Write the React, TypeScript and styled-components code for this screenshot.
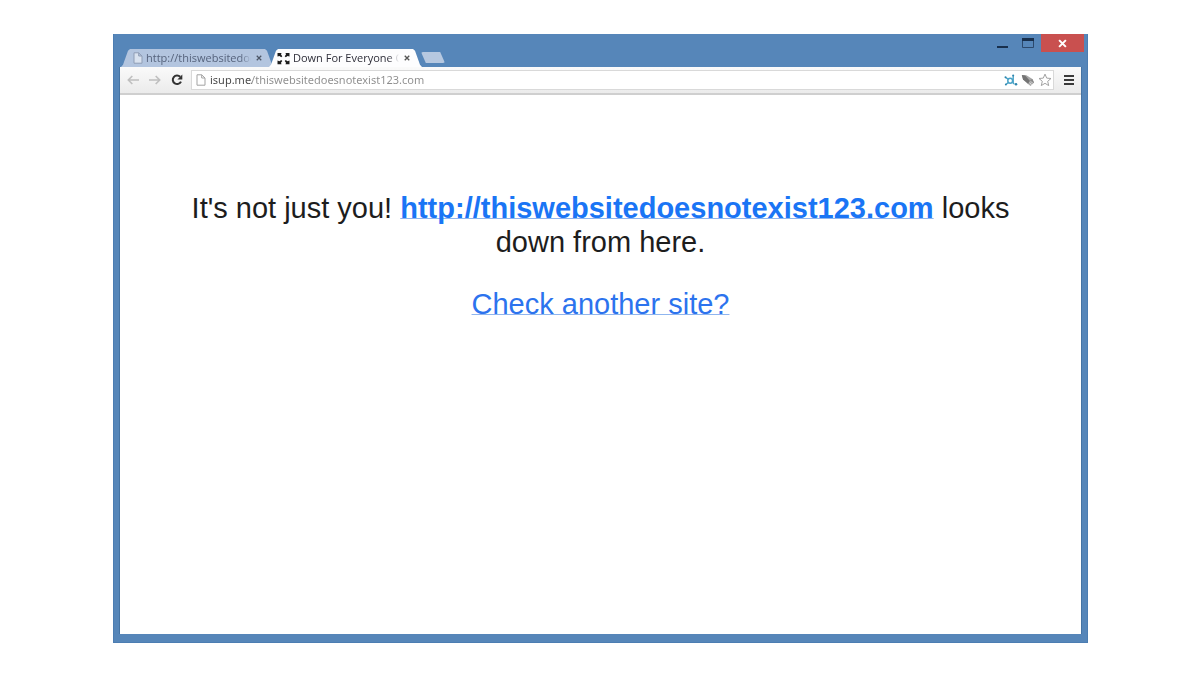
import React from "react";
import styled, { createGlobalStyle } from "styled-components";

const GlobalStyle = createGlobalStyle`
  * { box-sizing: border-box; }
  body { margin: 0; background: #fff; }
  button { border: 0; padding: 0; background: none; cursor: pointer; }
  svg { display: block; flex: none; }
`;

const uiFont = `"Noto Sans", "Open Sans", sans-serif`;
const tabFont = `"Open Sans", "Noto Sans", sans-serif`;

const Desktop = styled.div`
  display: flex;
  min-height: 100vh;
  padding: 34px 112px 32px 113px;
`;

const BrowserWindow = styled.div`
  flex: 1;
  min-width: 0;
  display: flex;
  flex-direction: column;
  padding-bottom: 8px;
  background: #5686b9;
  border: 1px solid #4c7db2;
  border-top: 0;
  font-family: ${uiFont};
`;

const TitleBar = styled.header`
  display: flex;
  justify-content: space-between;
  height: 33px;
  padding: 0 3px 0 7px;
`;

const TabStrip = styled.div`
  display: flex;
  align-items: flex-end;
  min-width: 0;
`;

const Tab = styled.div<{ $active?: boolean }>`
  position: relative;
  z-index: ${(p) => (p.$active ? 1 : 0)};
  display: flex;
  align-items: center;
  gap: 3px;
  width: 153px;
  height: 18px;
  padding: 0 10px 0 ${(p) => (p.$active ? 8 : 12)}px;
  margin-right: -5px;

  &::before {
    content: "";
    position: absolute;
    inset: 0;
    z-index: -1;
    background: ${(p) => (p.$active ? "#fdfdfe" : "#b3c5df")};
    clip-path: polygon(0 100%, 2px 88%, 7px 10%, 9px 0, calc(100% - 9px) 0, calc(100% - 7px) 10%, calc(100% - 2px) 88%, 100% 100%);
  }
`;

const TabTitle = styled.button<{ $active?: boolean }>`
  flex: 1;
  min-width: 0;
  overflow: hidden;
  text-align: left;
  white-space: nowrap;
  font: 11px/16px ${tabFont};
  color: ${(p) => (p.$active ? "#2f2f3a" : "#56637c")};
  mask-image: linear-gradient(to right, #000 90%, transparent);
`;

const TabClose = styled.button`
  display: flex;
  align-items: center;
  justify-content: center;
  width: 10px;
  height: 16px;
`;

const NewTab = styled.button`
  width: 24px;
  height: 11px;
  margin: 0 0 4px 4px;
  background: #b6c8e0;
  border-radius: 2px;
  clip-path: polygon(0 0, 80% 0, 100% 100%, 20% 100%);
`;

const WindowControls = styled.div`
  display: flex;
  align-items: flex-start;
`;

const ControlButton = styled.button<{ $close?: boolean }>`
  display: flex;
  align-items: center;
  justify-content: center;
  width: ${(p) => (p.$close ? 43 : 26)}px;
  height: 18px;
  background: ${(p) => (p.$close ? "#c9504f" : "transparent")};
`;

const Viewport = styled.div`
  flex: 1;
  display: flex;
  flex-direction: column;
  margin: 0 5px;
  background: #fff;
  border-left: 1px solid #4573a3;
  border-right: 1px solid #4573a3;
`;

const Toolbar = styled.div`
  display: flex;
  align-items: center;
  height: 28px;
  padding: 0 4px 0 2px;
  background: linear-gradient(#fafafa, #ebebeb);
  border-bottom: 2px solid #cfcfcf;
`;

const ToolButton = styled.button`
  display: flex;
  align-items: center;
  justify-content: center;
  width: 22px;
  height: 20px;
`;

const AddressBar = styled.div`
  flex: 1;
  min-width: 0;
  display: flex;
  align-items: center;
  height: 20px;
  margin: 0 6px 0 3px;
  padding-left: 4px;
  background: #fff;
  border: 1px solid #d9d9d9;
`;

const AddressInput = styled.input`
  flex: 1;
  min-width: 0;
  height: 18px;
  margin-left: 4px;
  padding: 0;
  border: 0;
  outline: 0;
  font: 11px/18px ${uiFont};
  background: linear-gradient(to right, #444 42px, #8c8c8c 42px);
  background-clip: text;
  -webkit-text-fill-color: transparent;
`;

const IconButton = styled.button`
  display: flex;
  align-items: center;
  justify-content: center;
  width: 17px;
  height: 18px;
`;

const Content = styled.main`
  flex: 1;
  padding: 96px 60px 40px;
  text-align: center;
  font: 29px/34px "Liberation Sans", Arial, sans-serif;
  color: #1d1d1d;
`;

const Message = styled.p`
  margin: 0 0 28px;
`;

const Link = styled.a<{ $strong?: boolean }>`
  font-weight: ${(p) => (p.$strong ? 700 : 400)};
  color: ${(p) => (p.$strong ? "#1a75f5" : "#2c73ee")};
  text-decoration: underline;
  text-decoration-color: #8fb5ef;
  text-decoration-thickness: 1px;
  text-underline-offset: 0;
  text-decoration-skip-ink: none;
`;

const PageIcon = ({ color }: { color: string }) => (
  <svg width="10" height="12" viewBox="0 0 10 12" fill="#fff" fillOpacity="0.5" stroke={color}>
    <path d="M1 .8h4.7L9 4v7.2H1z M5.7 .8V4H9" />
  </svg>
);

const Cross = ({ size, color, weight }: { size: number; color: string; weight: number }) => (
  <svg width={size} height={size} viewBox="0 0 8 8" stroke={color} strokeWidth={weight}>
    <path d="M1 1l6 6M7 1L1 7" />
  </svg>
);

const CornersIcon = () => (
  <svg width="13" height="13" viewBox="0 0 13 13" fill="#1c1c1c">
    <path d="M.5 1h4L4 2.6 5.3 4.2 4.2 5.3 2.5 4 .5 4.6zM12.5 1v3.6L10.5 4 8.8 5.3 7.7 4.2 9 2.6 8.5 1zM.5 12.3V8.6l2 .7L4.2 8l1.1 1.1L4 10.7l.5 1.6zM12.5 12.3h-4l.5-1.6-1.3-1.6L8.8 8l1.7 1.3 2-.7z" />
  </svg>
);

const Arrow = ({ back }: { back?: boolean }) => (
  <svg width="12" height="10" viewBox="0 0 12 10" fill="none" stroke="#bfbfbf" strokeWidth="1.6">
    <path d={back ? "M12 5H1.5M5.3 1L1.3 5l4 4" : "M0 5h10.5M6.7 1l4 4-4 4"} />
  </svg>
);

const ReloadIcon = () => (
  <svg width="12" height="12" viewBox="0 0 12 12">
    <path d="M9.2 2.8A4.3 4.3 0 1 0 10 7.6" fill="none" stroke="#333" strokeWidth="2" />
    <path d="M11.3 .5v5H6.4z" fill="#333" />
  </svg>
);

const MoleculeIcon = () => (
  <svg width="14" height="12" viewBox="0 0 14 12" fill="none" stroke="#4aa3c8">
    <ellipse cx="6.2" cy="6.8" rx="2.4" ry="2.5" strokeWidth="1.5" />
    <path d="M9.2 1v8.4M4.2 5.2L1.8 3.6M4.3 8.6L2.2 10.3M9.2 9l1 1" strokeWidth="1.4" />
    <g fill="#2f86ad" stroke="none">
      <circle cx="1.5" cy="3.2" r="1" />
      <circle cx="1.9" cy="10.4" r="1" />
      <circle cx="9.2" cy="1.4" r="1" />
      <circle cx="12" cy="10.2" r="1.3" />
    </g>
  </svg>
);

const RocketIcon = () => (
  <svg width="14" height="13" viewBox="0 0 14 13">
    <path d="M.8 1l4.6.2 6 3.8L13 8.4 9.6 12 6.4 9.6 2 5.4z" fill="#a8a8a8" />
    <path d="M.8 1l3.4.6 4.6 5.2-1.6 3L2 5.4z" fill="#737373" />
    <path d="M9 6.2l2.4-1.2L13 8.4l-1.6 1.2z" fill="#8a8a8a" />
    <path d="M8.6 8.6l2 2.2M9.9 7.4l2 2" stroke="#dedede" />
  </svg>
);

const StarIcon = () => (
  <svg width="14" height="14" viewBox="0 0 14 14" fill="#fff" stroke="#a2a2a2">
    <path d="M7 1.1l1.7 4 4.3.4-3.3 2.8 1 4.3L7 10.3l-3.7 2.3 1-4.3L1 5.5l4.3-.4z" />
  </svg>
);

export default function App() {
  return (
    <>
      <GlobalStyle />
      <Desktop>
        <BrowserWindow>
          <TitleBar>
            <TabStrip>
              <Tab>
                <PageIcon color="#8f9db5" />
                <TabTitle>http://thiswebsitedoes</TabTitle>
                <TabClose aria-label="Close first tab">
                  <Cross size={6} color="#4c5566" weight={1.6} />
                </TabClose>
              </Tab>
              <Tab $active>
                <CornersIcon />
                <TabTitle $active>Down For Everyone O</TabTitle>
                <TabClose aria-label="Close second tab">
                  <Cross size={6} color="#555" weight={1.8} />
                </TabClose>
              </Tab>
              <NewTab aria-label="New tab" />
            </TabStrip>
            <WindowControls>
              <ControlButton aria-label="Minimize">
                <svg width="11" height="12" viewBox="0 0 11 12">
                  <path d="M0 9h11v2H0z" fill="#182f4c" />
                </svg>
              </ControlButton>
              <ControlButton aria-label="Maximize">
                <svg width="12" height="10" viewBox="0 0 12 10">
                  <path d="M.5 1v8.5h11V1" fill="none" stroke="#2c496c" />
                  <path d="M0 0h12v3H0z" fill="#182f4c" />
                </svg>
              </ControlButton>
              <ControlButton $close aria-label="Close window">
                <Cross size={9} color="#fff" weight={1.8} />
              </ControlButton>
            </WindowControls>
          </TitleBar>
          <Viewport>
            <Toolbar>
              <ToolButton aria-label="Back"><Arrow back /></ToolButton>
              <ToolButton aria-label="Forward"><Arrow /></ToolButton>
              <ToolButton aria-label="Reload"><ReloadIcon /></ToolButton>
              <AddressBar>
                <PageIcon color="#a3a3a3" />
                <AddressInput aria-label="Address" defaultValue="isup.me/thiswebsitedoesnotexist123.com" />
                <IconButton aria-label="Connections"><MoleculeIcon /></IconButton>
                <IconButton aria-label="Launch"><RocketIcon /></IconButton>
                <IconButton aria-label="Bookmark"><StarIcon /></IconButton>
              </AddressBar>
              <IconButton aria-label="Menu">
                <svg width="10" height="10" viewBox="0 0 10 10" fill="#3a3a3a">
                  <path d="M0 0h10v2H0zM0 4h10v2H0zM0 8h10v2H0z" />
                </svg>
              </IconButton>
            </Toolbar>
            <Content>
              <Message>
                It's not just you!{" "}
                <Link $strong href="#site">http://thiswebsitedoesnotexist123.com</Link> looks down from here.
              </Message>
              <Link href="#check">Check another site?</Link>
            </Content>
          </Viewport>
        </BrowserWindow>
      </Desktop>
    </>
  );
}
